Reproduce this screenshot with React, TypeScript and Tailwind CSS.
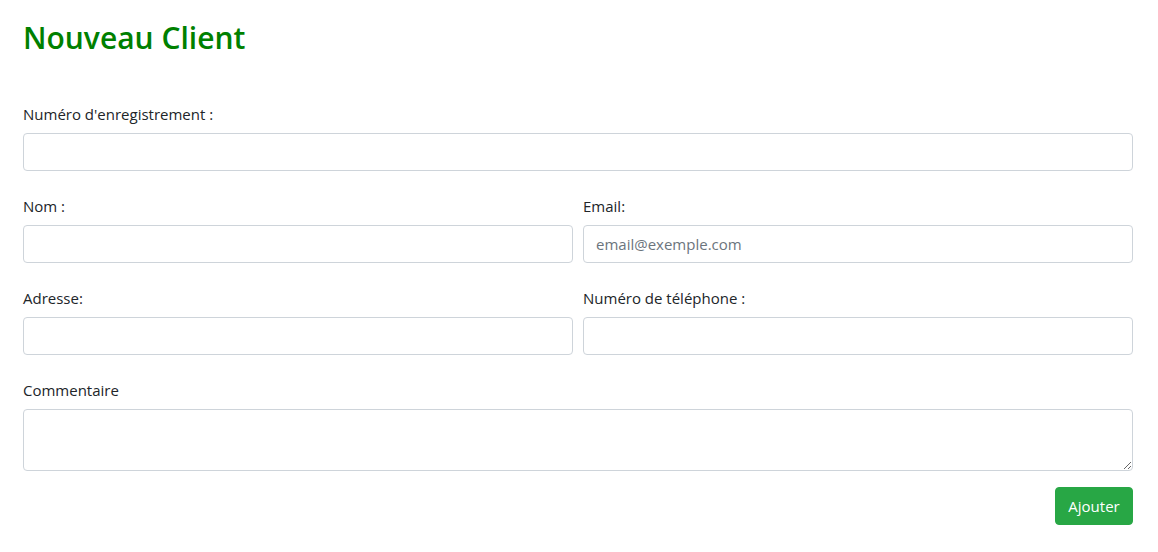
import React from "react";

const font = { fontFamily: '"Open Sans", "Noto Sans", sans-serif' };

function Field({ label, placeholder, className = "" }: { label: string; placeholder?: string; className?: string }) {
  return (
    <div className={className}>
      <label className="block text-[15px] leading-[24px] text-[#212529] pt-[1px] mb-[7px]">{label}</label>
      <input
        type="text"
        placeholder={placeholder}
        className="block w-full h-[38px] px-[12px] text-[15px] text-[#495057] placeholder:text-[#6c757d] border border-[#ced4da] rounded-[4px] bg-white outline-none"
      />
    </div>
  );
}

export default function App() {
  return (
    <div className="min-h-[552px] bg-white pl-[23px] pr-[25px] pt-[19px]" style={font}>
      <h2 className="text-[30px] leading-[38px] font-semibold text-[#008000] mb-[44px]">Nouveau Client</h2>
      <form>
        <Field label="Numéro d'enregistrement :" className="mb-[22px]" />
        <div className="grid grid-cols-2 gap-x-[10px]">
          <Field label="Nom :" className="mb-[22px]" />
          <Field label="Email:" placeholder="email@exemple.com" className="mb-[22px]" />
          <Field label="Adresse:" className="mb-[22px]" />
          <Field label="Numéro de téléphone :" className="mb-[22px]" />
        </div>
        <div>
          <label className="block text-[15px] leading-[24px] text-[#212529] pt-[1px] mb-[7px]">Commentaire</label>
          <textarea
            rows={2}
            className="block w-full h-[62px] px-[12px] py-[6px] text-[15px] border border-[#ced4da] rounded-[4px] bg-white outline-none"
          />
        </div>
        <div className="flex justify-end mt-[16px]">
          <button
            type="button"
            className="h-[38px] w-[78px] text-[15px] text-white bg-[#28a745] border border-[#28a745] rounded-[4px]"
          >
            Ajouter
          </button>
        </div>
      </form>
    </div>
  );
}
